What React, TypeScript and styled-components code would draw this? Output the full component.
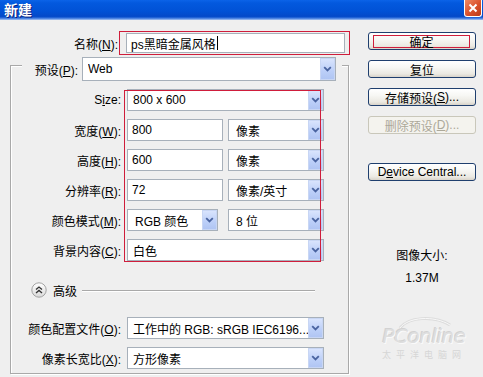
import React from 'react'
import styled, { createGlobalStyle } from 'styled-components'

const GlobalStyle = createGlobalStyle`
  html, body {
    margin: 0;
    padding: 0;
    background: #efefef;
  }
`

const Window = styled.div`
  width: 483px;
  height: 377px;
  overflow: hidden;
  position: relative;
  display: flex;
  flex-direction: column;
  background: #efefef;
  font-family: "Liberation Sans", "Noto Sans CJK SC", sans-serif;
  font-size: 12px;
  color: #000;
`

const TitleBar = styled.div`
  height: 20px;
  flex-shrink: 0;
  display: flex;
  justify-content: space-between;
  align-items: flex-start;
  padding-left: 4px;
  background: linear-gradient(
    #0b63e8 0%,
    #0359de 15%,
    #0152d6 55%,
    #0349c9 82%,
    #2f6fdc 90%,
    #a9c6f3 100%
  );
`

const Title = styled.span`
  color: #fff;
  font-family: "Noto Sans CJK SC", sans-serif;
  font-size: 14px;
  font-weight: bold;
  line-height: 18px;
  text-shadow: 1px 1px 0 #0c1f7c;
`

const CloseButton = styled.div`
  width: 18px;
  height: 17px;
  box-sizing: border-box;
  margin-right: 1px;
  border: 1px solid #fff;
  border-top: none;
  border-radius: 0 0 3px 3px;
  background: linear-gradient(135deg, #f08a64, #d9502b 55%, #b93a17);
  display: flex;
  align-items: center;
  justify-content: center;
`

const Body = styled.div`
  display: flex;
  padding-top: 11px;
`

const LeftColumn = styled.div`
  width: 350px;
  display: flex;
  flex-direction: column;
`

const NameRow = styled.div`
  display: flex;
  align-items: center;
  height: 24px;
`

const NameLabel = styled.span`
  width: 119px;
  padding-right: 1px;
  box-sizing: border-box;
  text-align: right;
`

const RedFrame = styled.div`
  border: 1px solid #cf1d3b;
  padding: 1px 4px 1px 6px;
`

const Field = styled.div<{ $w: number }>`
  width: ${p => p.$w}px;
  height: 22px;
  box-sizing: border-box;
  border: 1px solid #a7b0ba;
  background: #fff;
  display: flex;
  align-items: center;
  padding-left: 4px;
  flex-shrink: 0;
`

const NameField = styled(Field)`
  height: 20px;
`

const Caret = styled.span`
  width: 1px;
  height: 14px;
  background: #000;
  margin-left: 1px;
`

const Select = styled.div<{ $w: number; $h?: number }>`
  width: ${p => p.$w}px;
  height: ${p => p.$h || 22}px;
  box-sizing: border-box;
  border: 1px solid #a7b0ba;
  background: #fff;
  display: flex;
  align-items: center;
  padding-left: ${p => (p.$w < 120 ? 7 : 5)}px;
  flex-shrink: 0;
  white-space: nowrap;
`

const SelectText = styled.span`
  flex: 1;
  overflow: hidden;
`

const ArrowBox = styled.span`
  width: 15px;
  height: 100%;
  box-sizing: border-box;
  border: 1px solid #c8d6f4;
  background: linear-gradient(#d9e4fd, #bccff8 60%, #b0c5f3);
  display: flex;
  align-items: center;
  justify-content: center;
`

const GroupBox = styled.div`
  margin: 10px 0 0 10px;
  width: 339px;
  box-sizing: border-box;
  border: 1px solid #a9a9a9;
  box-shadow: inset 1px 1px 0 #fff, 1px 1px 0 #fff;
  padding-bottom: 4px;
  display: flex;
  flex-direction: column;
`

const PresetRow = styled.div`
  margin: -9px 6px 0 11px;
  padding-right: 5px;
  background: #efefef;
  display: flex;
  align-items: center;
  gap: 4px;
`

const PresetLabel = styled.span`
  width: 56px;
  text-align: right;
`

const DocRows = styled.div`
  position: relative;
  margin-top: 8px;
  display: flex;
  flex-direction: column;
  gap: 8px;
`

const Highlight = styled.div`
  position: absolute;
  left: 113px;
  top: 1px;
  width: 197px;
  height: 172px;
  box-sizing: border-box;
  border: 1px solid #cf1d3b;
  pointer-events: none;
`

const Row = styled.div`
  display: flex;
  align-items: center;
  height: 22px;
  gap: 6px;
`

const RowLabel = styled.span`
  width: 110px;
  text-align: right;
  white-space: nowrap;
`

const Controls = styled.div<{ $gap?: number }>`
  display: flex;
  gap: ${p => p.$gap || 5}px;
`

const AdvancedRow = styled.div`
  display: flex;
  align-items: center;
  height: 16px;
  margin: 21px 33px 0 20px;
`

const AdvancedText = styled.span`
  margin: 0 5px 0 6px;
`

const Etch = styled.div`
  flex: 1;
  height: 1px;
  background: #a9a9a9;
  box-shadow: 0 1px 0 #fff;
`

const LowerRows = styled.div`
  margin-top: 19px;
  display: flex;
  flex-direction: column;
  gap: 8px;
`

const RightColumn = styled.div`
  width: 108px;
  margin-left: 18px;
  padding-top: 1px;
  display: flex;
  flex-direction: column;
  gap: 10px;
`

const Button = styled.div<{ $disabled?: boolean; $mt?: number }>`
  height: 18px;
  box-sizing: border-box;
  margin-top: ${p => p.$mt || 0}px;
  border: 1px solid ${p => (p.$disabled ? '#c9c7ba' : '#1f3f6e')};
  border-radius: 3px;
  background: ${p =>
    p.$disabled
      ? '#f4f3ee'
      : 'linear-gradient(#ffffff, #f7f7f4 40%, #ebe9e2 80%, #d8d3c9)'};
  color: ${p => (p.$disabled ? '#aca899' : '#000')};
  display: flex;
  align-items: center;
  justify-content: center;
  white-space: nowrap;
`

const FocusFrame = styled.span`
  width: 97px;
  height: 13px;
  margin-left: -1px;
  box-sizing: border-box;
  border: 1px solid #cf1d3b;
  display: flex;
  align-items: center;
  justify-content: center;
`

const InfoTitle = styled.div`
  margin-top: 57px;
  text-align: center;
  line-height: 16px;
`

const InfoValue = styled.div`
  margin-top: -4px;
  text-align: center;
  line-height: 16px;
`

const Watermark = styled.div`
  position: absolute;
  left: 372px;
  top: 316px;
  width: 104px;
  display: flex;
  flex-direction: column;
  align-items: center;
  color: #dedede;
  pointer-events: none;
`

const WatermarkLogo = styled.span`
  font-family: "DejaVu Sans", sans-serif;
  font-size: 20px;
  font-style: italic;
  line-height: 24px;
  margin-top: -4px;
  letter-spacing: -0.5px;
  text-shadow: 1px 1px 0 #fafafa, -1px -1px 0 #d2d2d2;
`

const WatermarkSub = styled.span`
  font-family: "Noto Sans CJK SC", sans-serif;
  font-size: 9px;
  line-height: 14px;
  letter-spacing: 5px;
  color: #d6d6d6;
`

const Arrow = () => (
  <ArrowBox>
    <svg width="9" height="6" viewBox="0 0 9 6">
      <path d="M1.2 1.2 L4.5 4.5 L7.8 1.2" fill="none" stroke="#4a64a0" strokeWidth="1.8" />
    </svg>
  </ArrowBox>
)

const Dropdown: React.FC<{ w: number; h?: number; children: React.ReactNode }> = ({ w, h, children }) => (
  <Select $w={w} $h={h}>
    <SelectText>{children}</SelectText>
    <Arrow />
  </Select>
)

const CollapseIcon = () => (
  <svg width="16" height="16" viewBox="0 0 16 16">
    <defs>
      <linearGradient id="adv" x1="0" y1="0" x2="0" y2="1">
        <stop offset="0" stopColor="#ffffff" />
        <stop offset="1" stopColor="#d9d9d9" />
      </linearGradient>
    </defs>
    <circle cx="8" cy="8" r="7.2" fill="url(#adv)" stroke="#a3a3a3" />
    <path d="M5 7.6 L8 5 L11 7.6 M5 11 L8 8.4 L11 11" fill="none" stroke="#333" strokeWidth="1.3" />
  </svg>
)

export default function App() {
  return (
    <Window>
      <GlobalStyle />
      <TitleBar>
        <Title>新建</Title>
        <CloseButton>
          <svg width="10" height="10" viewBox="0 0 10 10">
            <path d="M1.5 1.5 L8.5 8.5 M8.5 1.5 L1.5 8.5" stroke="#fff" strokeWidth="2" />
          </svg>
        </CloseButton>
      </TitleBar>
      <Body>
        <LeftColumn>
          <NameRow>
            <NameLabel>
              名称(<u>N</u>):
            </NameLabel>
            <RedFrame>
              <NameField $w={219}>
                ps黑暗金属风格
                <Caret />
              </NameField>
            </RedFrame>
          </NameRow>

          <GroupBox>
            <PresetRow>
              <PresetLabel>
                预设(<u>P</u>):
              </PresetLabel>
              <Dropdown w={254} h={24}>Web</Dropdown>
            </PresetRow>

            <DocRows>
              <Highlight />
              <Row>
                <RowLabel>
                  S<u>i</u>ze:
                </RowLabel>
                <Dropdown w={197}>800 x 600</Dropdown>
              </Row>
              <Row>
                <RowLabel>
                  宽度(<u>W</u>):
                </RowLabel>
                <Controls>
                  <Field $w={96}>800</Field>
                  <Dropdown w={96}>像素</Dropdown>
                </Controls>
              </Row>
              <Row>
                <RowLabel>
                  高度(<u>H</u>):
                </RowLabel>
                <Controls>
                  <Field $w={96}>600</Field>
                  <Dropdown w={96}>像素</Dropdown>
                </Controls>
              </Row>
              <Row>
                <RowLabel>
                  分辨率(<u>R</u>):
                </RowLabel>
                <Controls>
                  <Field $w={96}>72</Field>
                  <Dropdown w={96}>像素/英寸</Dropdown>
                </Controls>
              </Row>
              <Row>
                <RowLabel>
                  颜色模式(<u>M</u>):
                </RowLabel>
                <Controls $gap={10}>
                  <Dropdown w={91}>RGB 颜色</Dropdown>
                  <Dropdown w={96}>8 位</Dropdown>
                </Controls>
              </Row>
              <Row>
                <RowLabel>
                  背景内容(<u>C</u>):
                </RowLabel>
                <Dropdown w={197}>白色</Dropdown>
              </Row>
            </DocRows>

            <AdvancedRow>
              <CollapseIcon />
              <AdvancedText>高级</AdvancedText>
              <Etch />
            </AdvancedRow>

            <LowerRows>
              <Row>
                <RowLabel>
                  颜色配置文件(<u>O</u>):
                </RowLabel>
                <Dropdown w={197}>工作中的 RGB: sRGB IEC6196...</Dropdown>
              </Row>
              <Row>
                <RowLabel>
                  像素长宽比(<u>X</u>):
                </RowLabel>
                <Dropdown w={197}>方形像素</Dropdown>
              </Row>
            </LowerRows>
          </GroupBox>
        </LeftColumn>

        <RightColumn>
          <Button>
            <FocusFrame>确定</FocusFrame>
          </Button>
          <Button>复位</Button>
          <Button>
            存储预设(<u>S</u>)...
          </Button>
          <Button $disabled>
            删除预设(<u>D</u>)...
          </Button>
          <Button $mt={19}>
            D<u>e</u>vice Central...
          </Button>
          <InfoTitle>图像大小:</InfoTitle>
          <InfoValue>1.37M</InfoValue>
        </RightColumn>
      </Body>

      <Watermark>
        <svg width="60" height="12" viewBox="0 0 60 12">
          <path d="M6 12 C 14 1, 40 -1, 56 9" fill="none" stroke="#dcdcdc" strokeWidth="3" />
          <path d="M6 12 C 14 1, 40 -1, 56 9" fill="none" stroke="#f8f8f8" strokeWidth="1" />
        </svg>
        <WatermarkLogo>PConline</WatermarkLogo>
        <WatermarkSub>太平洋电脑网</WatermarkSub>
      </Watermark>
    </Window>
  )
}
